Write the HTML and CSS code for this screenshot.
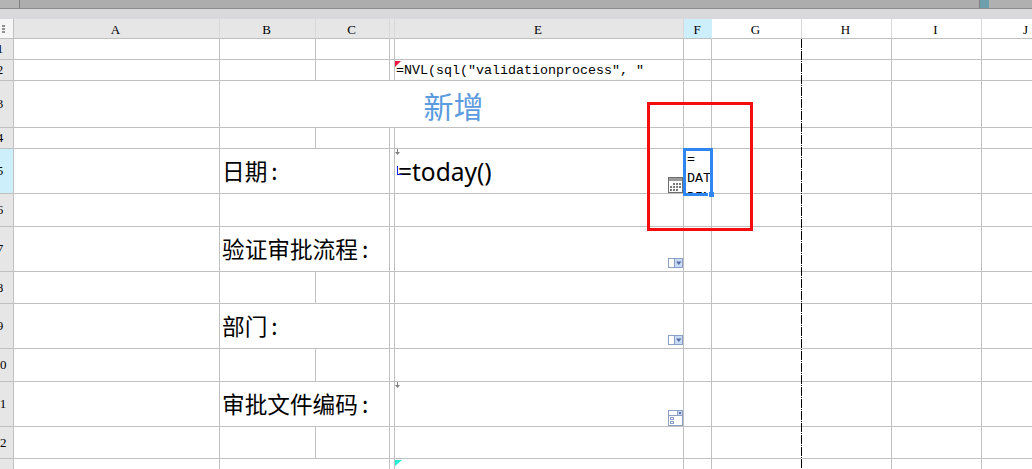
FILE: index.html
```html
<!DOCTYPE html>
<html lang="zh">
<head>
<meta charset="utf-8">
<title>Sheet</title>
<link rel="stylesheet" href="styles.css">
</head>
<body>
<div class="topbar">
  <div class="seg seg-left"></div>
  <div class="seg seg-main"></div>
  <div class="thumb"></div>
  <div class="seg seg-right"></div>
</div>
<div class="strip"></div>
<div class="sheet">
<table class="grid">
<colgroup><col class="c0"><col class="ca"><col class="cb"><col class="cc"><col class="cd"><col class="ce"><col class="cf"><col class="cg"><col class="cg"><col class="cg"><col class="cg"></colgroup>
<thead>
<tr class="h20"><th class="corner"><span class="dots"></span></th><th>A</th><th>B</th><th>C</th><th></th><th>E</th><th class="active">F</th><th class="plain">G</th><th class="plain">H</th><th class="plain">I</th><th class="plain">J</th></tr>
</thead>
<tbody>
<tr class="h21"><th class="rh"><span>1</span></th><td></td><td></td><td></td><td></td><td></td><td></td><td></td><td></td><td></td><td></td></tr>
<tr class="h21"><th class="rh"><span>2</span></th><td></td><td></td><td></td><td></td><td class="mono"><div class="holder"><i class="mark-red"></i>=NVL(sql("validationprocess", "</div></td><td></td><td></td><td></td><td></td><td></td></tr>
<tr class="h47"><th class="rh"><span>3</span></th><td></td><td colspan="4" class="title">新增</td><td></td><td></td><td></td><td></td><td></td></tr>
<tr class="h21"><th class="rh"><span>4</span></th><td></td><td></td><td></td><td></td><td></td><td></td><td></td><td></td><td></td><td></td></tr>
<tr class="h45"><th class="rh rh-active"><span>5</span></th><td></td><td colspan="2" class="label">日期<span class="colon">:</span></td><td></td>
  <td class="formula"><div class="holder"><i class="mark-down"></i><i class="mark-blue"></i>=today()
    <svg class="widget w-cal" viewBox="0 0 15 16" width="15" height="16"><rect x="0.5" y="0.5" width="14" height="15" fill="#fff" stroke="#6e6e6e"/><rect x="1" y="1" width="13" height="3" fill="#9a9a9a"/><g fill="#7a7a7a"><rect x="5" y="6" width="2" height="2"/><rect x="8" y="6" width="2" height="2"/><rect x="11" y="6" width="2" height="2"/><rect x="2" y="9" width="2" height="2"/><rect x="5" y="9" width="2" height="2"/><rect x="8" y="9" width="2" height="2"/><rect x="11" y="9" width="2" height="2"/><rect x="2" y="12" width="2" height="2"/><rect x="5" y="12" width="2" height="2"/><rect x="8" y="12" width="2" height="2"/></g></svg></div></td>
  <td class="mono"><div class="clip">=<br>DAT<br>DIN</div></td><td></td><td></td><td></td><td></td></tr>
<tr class="h33"><th class="rh"><span>6</span></th><td></td><td colspan="2"></td><td></td><td></td><td></td><td></td><td></td><td></td><td></td></tr>
<tr class="h45"><th class="rh"><span>7</span></th><td></td><td colspan="2" class="label">验证审批流程<span class="colon">:</span></td><td></td>
  <td><div class="holder"><svg class="widget w-drop" viewBox="0 0 15 10" width="15" height="10"><rect x="0.5" y="0.5" width="14" height="9" fill="#fff" stroke="#8c9fc6"/><rect x="6" y="1" width="8" height="8" fill="#c9dcf5"/><rect x="6" y="1" width="1" height="8" fill="#8c9fc6"/><path d="M8 3.5h5.5l-2.75 3.5z" fill="#5a6ea8"/></svg></div></td>
  <td></td><td></td><td></td><td></td><td></td></tr>
<tr class="h32"><th class="rh"><span>8</span></th><td></td><td></td><td></td><td></td><td></td><td></td><td></td><td></td><td></td><td></td></tr>
<tr class="h45"><th class="rh"><span>9</span></th><td></td><td colspan="2" class="label">部门<span class="colon">:</span></td><td></td>
  <td><div class="holder"><svg class="widget w-drop" viewBox="0 0 15 10" width="15" height="10"><rect x="0.5" y="0.5" width="14" height="9" fill="#fff" stroke="#8c9fc6"/><rect x="6" y="1" width="8" height="8" fill="#c9dcf5"/><rect x="6" y="1" width="1" height="8" fill="#8c9fc6"/><path d="M8 3.5h5.5l-2.75 3.5z" fill="#5a6ea8"/></svg></div></td>
  <td></td><td></td><td></td><td></td><td></td></tr>
<tr class="h33"><th class="rh"><span>10</span></th><td></td><td></td><td></td><td></td><td></td><td></td><td></td><td></td><td></td><td></td></tr>
<tr class="h45"><th class="rh"><span>11</span></th><td></td><td colspan="2" class="label">审批文件编码<span class="colon">:</span></td><td></td>
  <td><div class="holder"><i class="mark-down"></i><svg class="widget w-list" viewBox="0 0 15 16" width="15" height="16"><rect x="0.5" y="0.5" width="14" height="15" fill="#fff" stroke="#8c9fc6"/><rect x="1" y="5" width="13" height="1" fill="#8c9fc6"/><rect x="9" y="1" width="1" height="4" fill="#8c9fc6"/><rect x="10" y="1" width="4" height="4" fill="#c9dcf5"/><rect x="11" y="2" width="2" height="2" fill="#5a6ea8"/><rect x="2.5" y="7.5" width="3" height="2" fill="#fff" stroke="#8c9fc6"/><rect x="2.5" y="11.5" width="3" height="2" fill="#fff" stroke="#8c9fc6"/></svg></div></td>
  <td></td><td></td><td></td><td></td><td></td></tr>
<tr class="h32"><th class="rh"><span>12</span></th><td></td><td></td><td></td><td></td><td></td><td></td><td></td><td></td><td></td><td></td></tr>
<tr class="h31"><th class="rh"><span>13</span></th><td></td><td colspan="2"></td><td></td><td><div class="holder"><i class="mark-cyan"></i></div></td><td></td><td></td><td></td><td></td><td></td></tr>
</tbody>
</table>
<div class="page-break"></div>
<div class="red-box"></div>
<div class="selection"><i class="handle"></i></div>
</div>
</body>
</html>
```
FILE: styles.css
```css
* { box-sizing: border-box; }
html, body { margin: 0; padding: 0; height: 100%; overflow: hidden; background: #fff; }

.topbar { display: flex; height: 9px; border-bottom: 1px solid #8e8e8e; background: #adadad; }
.seg-left { width: 19px; background: #b4b4b4; }
.seg-main { flex: 1; border-left: 1px solid #808080; }
.thumb { width: 10px; background: #6d9fac; border-left: 1px solid #808080; }
.seg-right { width: 43px; background: #b0b0b0; }
.strip { height: 10px; background: #d9d9db; }

.sheet { position: relative; width: 1072px; }
.grid { border-collapse: separate; border-spacing: 0; table-layout: fixed; width: 1072px; font-family: "Liberation Mono", monospace; font-size: 12px; color: #000; }
.c0 { width: 14px; } .ca { width: 206px; } .cb { width: 96px; } .cc { width: 74px; }
.cd { width: 5px; } .ce { width: 289px; } .cf { width: 28px; } .cg { width: 90px; }

.h20 > * { height: 20px; } .h21 > * { height: 21px; } .h31 > * { height: 31px; }
.h32 > * { height: 32px; } .h33 > * { height: 33px; } .h45 > * { height: 45px; } .h47 > * { height: 47px; }

td, th { padding: 0; font-weight: normal; border-right: 1px solid #c0c0c0; border-bottom: 1px solid #c0c0c0; overflow: hidden; white-space: nowrap; }
thead th { background: #e6e6e6; text-align: center; border-right-color: #d8d8d8; padding: 2px 2px 0 0; font-family: "Liberation Serif", serif; font-size: 13px; }
thead th.active { background: #cdeefb; border-right-color: #cdeefb; padding-right: 1px; }
thead th.plain { background: #fff; }
thead th.corner { background: #f6f6f6; border-right-color: #c0c0c0; padding: 0; }
.dots { display: block; width: 3px; height: 8px; margin-left: 2px; background: repeating-linear-gradient(#909090 0 2px, transparent 2px 3px); }

.rh { background: #e6e6e6; font-family: "Liberation Serif", serif; font-size: 13px; }
.rh span { display: flex; justify-content: center; width: 0; }
.rh-active { background: #cdeefb; }

.mono { font-size: 13.33px; vertical-align: middle; }
.holder { position: relative; display: flex; align-items: center; padding-left: 1px; }
.h21 .holder { height: 20px; padding-top: 1px; } .h45 .holder { height: 44px; } .h31 .holder { height: 30px; }

.title { font-family: "Noto Sans CJK SC", sans-serif; font-size: 30px; color: #5b9bde; text-align: center; padding: 2px 0 0 4px; line-height: 1; }
.label { font-family: "Noto Sans CJK SC", sans-serif; font-size: 22.67px; padding-left: 2px; line-height: 1; }
.colon { margin-left: 4px; }
.formula { font-family: "Noto Sans", sans-serif; font-size: 24.5px; }
.formula .holder { padding-left: 3px; }
.clip { height: 44px; overflow: hidden; line-height: 19px; padding: 1px 0 0 3px; }

.widget { position: absolute; display: block; }
.w-cal { right: 0; bottom: 0; }
.w-drop { right: 0; top: 31px; }
.w-list { right: 0; top: 28px; }

.mark-red, .mark-cyan, .mark-blue, .mark-down { position: absolute; display: block; }
.mark-red { left: 0; top: 1px; width: 0; height: 0; border-top: 6px solid #ee1540; border-right: 6px solid transparent; }
.mark-cyan { left: 0; top: 1px; width: 0; height: 0; border-top: 6px solid #22f0d8; border-right: 7px solid transparent; }
.mark-down { left: 0; top: 0; width: 5px; height: 6px; background: #808080; clip-path: polygon(40% 0, 60% 0, 60% 50%, 100% 50%, 50% 100%, 0 50%, 40% 50%); }
.mark-blue { left: 2px; top: 17px; width: 5px; height: 11px; z-index: 1; background: linear-gradient(#1420f0, #1420f0) 0 0 / 1px 9px no-repeat, linear-gradient(#1420f0, #1420f0) 0 8px / 5px 1px no-repeat; }

.page-break { position: absolute; left: 801px; top: 20px; bottom: 0; width: 1px; background: repeating-linear-gradient(#000 0 9px, #fff 9px 10px, #000 10px 11px, #fff 11px 12px); }
.red-box { position: absolute; left: 647px; top: 83px; width: 106px; height: 129px; border: 3px solid #f50d0d; }
.selection { position: absolute; left: 683px; top: 129px; width: 30px; height: 48px; border: 3px solid #2f86f0; }
.handle { position: absolute; right: -4px; bottom: -4px; width: 5px; height: 5px; background: #2f86f0; display: block; box-shadow: -1px 0 #fff; }
```
